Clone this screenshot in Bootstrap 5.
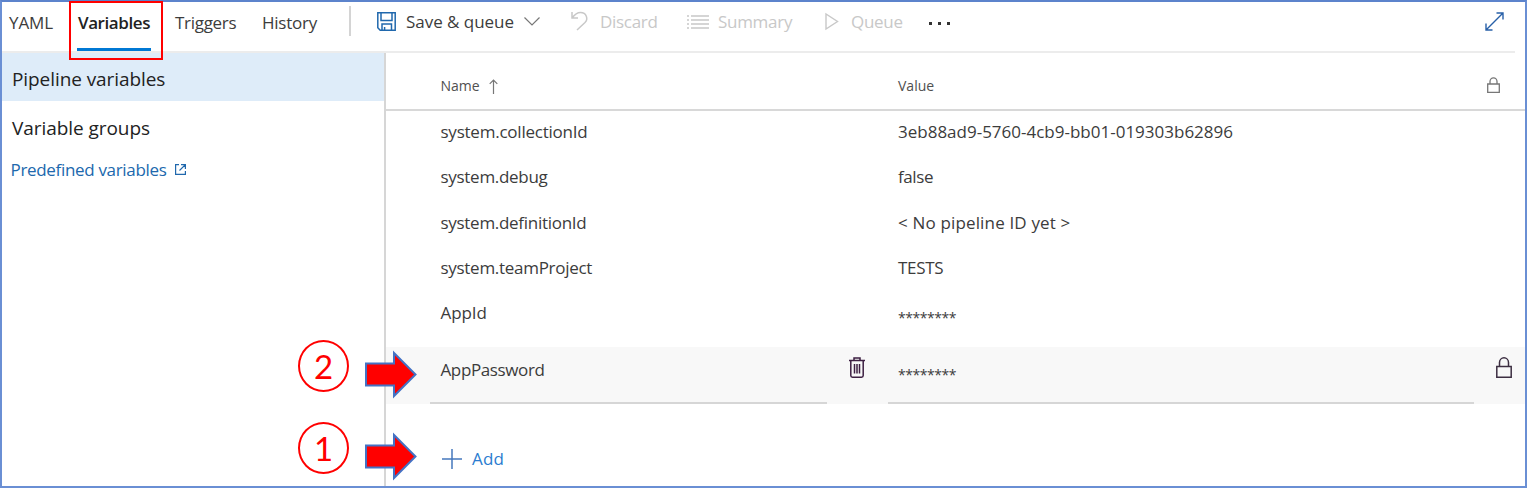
<!DOCTYPE html>
<html lang="en">
<head>
<meta charset="utf-8">
<title>Pipeline variables</title>
<link rel="stylesheet" href="https://cdn.jsdelivr.net/npm/bootstrap@5.3.0/dist/css/bootstrap.min.css">
<style>
body{font-family:"Open Sans","Noto Sans",sans-serif;font-size:17px;line-height:24px;letter-spacing:-.29px;color:#3c3c3c;background:#fff;white-space:nowrap;overflow:hidden}
svg{display:block;flex:none;overflow:visible}
.frame{width:1527px;height:488px;border:2px solid #6a8fd4;border-top-color:#5c83cc}
.topbar{height:50px;padding-left:7px}
.topbar::after{content:"";position:absolute;left:0;right:10px;bottom:-1px;height:2px;background:#ececec}
.tab{height:42px;padding:9px 0 0;color:#3c3c3c}
.tab-yaml{width:69px;letter-spacing:-.1px}
.tab-vars{width:97px;font-weight:600;letter-spacing:-.42px;color:#222}
.tab-trig{width:87px}
.tab-hist{width:87px;letter-spacing:-.24px}
.marker{left:67px;top:-1px;width:94px;height:59px;border:2px solid #f00;z-index:3}
.marker::after{content:"";position:absolute;left:6px;top:45px;width:74px;height:3px;background:#0078d4}
.vsep{width:2px;height:30px;background:#d4d4d4;margin-top:4px}
.cmd{height:42px;padding-top:7px}
.cmd span{padding-top:1px}
.off{color:#c8c8c8}
.sidebar{width:384px;border-right:2px solid #d6d6d6;font-size:19px;letter-spacing:-.08px;color:#222}
.side-item{height:49px;padding-left:10px}
.side-item.on{background:#deecf9}
.side-link{font-size:17px;letter-spacing:-.32px;color:#2068ad;padding:8px 0 0 8.5px}
.thead-row{height:59px;border-bottom:2px solid #d8d8d8;font-size:14px;letter-spacing:0;color:#505050;padding-top:9px}
.thead-row>div{padding-top:2px}
.var-row{height:45.3px;padding-bottom:3px}
.c-name{width:457px;padding-left:54.500px}
.c-value{padding-left:55px}
.stars{font-size:14px;letter-spacing:-.46px;padding-top:10px}
.edit{height:57px;background:#f8f8f8;margin-top:10px}
.field-name,.field-value{border-bottom:2px solid #d6d6d6;padding:0 0 10px 10.500px}
.field-name{width:397px;margin-left:44px;letter-spacing:-.38px}
.field-value{width:586px;padding-left:10px}
.trash{width:61px;padding-left:22px}
.add{color:#2b7cd0;letter-spacing:.15px;padding:43px 0 0 56px}
.step{width:51px;height:52px;border:2px solid #f00;border-radius:50%;color:#f00;font:33px/48px Lato,sans-serif;letter-spacing:0;text-align:center;left:298px;z-index:3}
.arrow{left:365px;z-index:3}
.s2{top:340px}.s1{top:422px}.a2{top:351px}.a1{top:433px}
</style>
<script src="https://cdn.jsdelivr.net/npm/bootstrap@5.3.0/dist/js/bootstrap.bundle.min.js"></script>
</head>
<body>
<div class="frame position-relative d-flex flex-column">
  <header class="topbar position-relative d-flex">
    <nav class="d-flex">
      <a class="tab tab-yaml text-decoration-none">YAML</a>
      <a class="tab tab-vars text-decoration-none">Variables</a>
      <a class="tab tab-trig text-decoration-none">Triggers</a>
      <a class="tab tab-hist text-decoration-none">History</a>
    </nav>
    <div class="vsep"></div>
    <div class="cmd d-flex" style="padding-left:26px;width:220px">
      <svg width="19" height="19" viewBox="0 0 19 19" fill="none" stroke="#2068ad" stroke-width="1.5" style="margin-top:3px"><path d="M.8.8h17.400v17.400H3.200L.8 15.800zM4 1v7.500h11V1M5 18v-6h9.500v6M7.600 18v-3"/></svg>
      <span style="margin-left:10px;width:118px;letter-spacing:-.03px">Save &amp; queue</span>
      <svg width="16" height="9" viewBox="0 0 16 9" fill="none" stroke="#777" stroke-width="1.2" style="margin-top:8px"><path d="M.5.5 8 8 15.500.5"/></svg>
    </div>
    <div class="cmd off d-flex" style="width:116px">
      <svg width="17" height="20" viewBox="0 0 17 20" fill="none" stroke="#c8c8c8" stroke-width="1.5" style="margin-top:2px"><path d="M1 1v6h6M1 7C4 3 6 1.500 9.500 1.500c6 0 8 6.500 4.500 10L6 19"/></svg>
      <span style="margin-left:12px">Discard</span>
    </div>
    <div class="cmd off d-flex" style="width:138px">
      <svg width="22" height="14" viewBox="0 0 22 14" stroke="#c8c8c8" stroke-width="1.3" style="margin-top:6px"><path d="M0 1h2M4 1h18M0 5h2M4 5h18M0 9h2M4 9h18M0 13h2M4 13h18"/></svg>
      <span style="margin-left:9px">Summary</span>
    </div>
    <div class="cmd off d-flex" style="width:104px">
      <svg width="14" height="17" viewBox="0 0 14 17" fill="none" stroke="#c8c8c8" stroke-width="1.4" style="margin-top:4px"><path d="M1 1v15l11.500-7.500z"/></svg>
      <span style="margin-left:12px">Queue</span>
    </div>
    <div class="cmd" style="width:556px">
      <svg width="22" height="4" fill="#333" style="margin-top:13px"><path d="M0 0h3v3H0zM9 0h3v3H9zM18 0h3v3h-3z"/></svg>
    </div>
    <div class="cmd">
      <svg width="19" height="19" viewBox="0 0 19 19" fill="none" stroke="#2860a8" stroke-width="1.4" style="margin-top:3px"><path d="M1 18 18 1M11.500 1H18v6.500M1 11.500V18h6.500"/></svg>
    </div>
  </header>

  <div class="d-flex flex-grow-1">
    <aside class="sidebar flex-shrink-0">
      <div class="side-item on d-flex align-items-center"><span style="margin-top:4px">Pipeline variables</span></div>
      <div class="side-item d-flex align-items-center"><span style="letter-spacing:-.06px;margin-top:4px">Variable groups</span></div>
      <a class="side-link d-flex text-decoration-none">Predefined variables
        <svg width="11" height="11" viewBox="0 0 11 11" fill="none" stroke="#2068ad" stroke-width="1.200" style="margin:6px 0 0 8px"><path d="M4 .6H.6v9.800h9.800V7M6 .6h4.400V5M10.400.6 4.500 6.500"/></svg>
      </a>
    </aside>

    <main class="flex-grow-1">
      <div class="thead-row d-flex align-items-center">
        <div class="c-name d-flex">Name
          <svg width="9" height="15" viewBox="0 0 9 15" fill="none" stroke="#777" stroke-width="1.200" style="margin:5px 0 0 9px"><path d="M4.500 15V1M.7 4.800 4.500 1l3.800 3.800"/></svg>
        </div>
        <div class="c-value" style="width:644px">Value</div>
        <svg width="13" height="16" viewBox="0 0 13 16" fill="none" stroke="#777" stroke-width="1.300"><path d="M.7 7h11.600v8.300H.7zM3 7V4.500a3.500 3.700 0 0 1 7 0V7"/></svg>
      </div>
      <div class="var-row d-flex align-items-center"><div class="c-name" style="letter-spacing:-.23px">system.collectionId</div><div class="c-value" style="letter-spacing:0">3eb88ad9-5760-4cb9-bb01-019303b62896</div></div>
      <div class="var-row d-flex align-items-center"><div class="c-name">system.debug</div><div class="c-value" style="letter-spacing:-.4px">false</div></div>
      <div class="var-row d-flex align-items-center"><div class="c-name">system.definitionId</div><div class="c-value" style="letter-spacing:.16px">&lt; No pipeline ID yet &gt;</div></div>
      <div class="var-row d-flex align-items-center"><div class="c-name">system.teamProject</div><div class="c-value">TESTS</div></div>
      <div class="var-row d-flex align-items-center"><div class="c-name" style="letter-spacing:-.1px">AppId</div><div class="c-value stars">********</div></div>
      <div class="edit d-flex">
        <div class="field-name d-flex align-items-center">AppPassword</div>
        <div class="trash">
          <svg width="16" height="21" viewBox="0 0 16 21" fill="none" stroke="#3d1f42" stroke-width="1.500" style="margin-top:10px"><path d="M0 3.500h16M5 3V1h6v2M1.800 4v14.500q0 1.700 1.700 1.700h9q1.700 0 1.700-1.700V4M5.500 7v9.500M8 7v9.500M10.500 7v9.500"/></svg>
        </div>
        <div class="field-value d-flex align-items-center"><span class="stars">********</span></div>
        <svg width="16" height="21" viewBox="0 0 16 21" fill="none" stroke="#3d2f42" stroke-width="1.500" style="margin:10px 0 0 22px"><path d="M.8 9.500h14.400v10.700H.8zM3.500 9.500V5.500a4.500 4.700 0 0 1 9 0v4"/></svg>
      </div>
      <div class="add d-flex">
        <svg width="20" height="20" stroke="#4678bd" stroke-width="1.500" style="margin:2px 10px 0 0"><path d="M0 10h20M10 0v20"/></svg>Add
      </div>
    </main>
  </div>
  <div class="marker position-absolute"></div>
</div>

<!-- Numbered step callouts -->
<div class="step s2 position-absolute">2</div>
<div class="step s1 position-absolute">1</div>
<svg class="arrow a2 position-absolute" width="52" height="47"><path d="M1 12.500h28V2l21.500 21.500L29 45V34.500H1z" fill="#f00" stroke="#4472c4" stroke-width="2"/></svg>
<svg class="arrow a1 position-absolute" width="52" height="47"><path d="M1 12.500h28V2l21.500 21.500L29 45V34.500H1z" fill="#f00" stroke="#4472c4" stroke-width="2"/></svg>
</body>
</html>
